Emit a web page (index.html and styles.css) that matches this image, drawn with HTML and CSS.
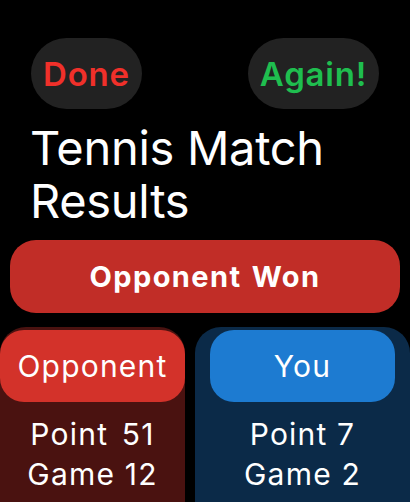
FILE: index.html
```html
<!DOCTYPE html>
<html>
<head>
<meta charset="utf-8">
<link rel="stylesheet" href="styles.css">
</head>
<body>
<div class="screen">
  <div class="topbar">
    <div class="pill done">Done</div>
    <div class="pill again">Again!</div>
  </div>
  <h1 class="title">Tennis Match<br>Results</h1>
  <div class="banner">Opponent Won</div>
  <div class="panels">
    <div class="panel panel-opp">
      <div class="player player-opp">Opponent</div>
      <div class="stats">
        <div class="wide">Point 51</div>
        <div>Game 12</div>
      </div>
    </div>
    <div class="panel panel-you">
      <div class="player player-you">You</div>
      <div class="stats">
        <div>Point 7</div>
        <div>Game 2</div>
      </div>
    </div>
  </div>
</div>
</body>
</html>
```
FILE: styles.css
```css
html, body {
  margin: 0;
  padding: 0;
  background: #000;
}
body {
  font-family: Inter, "Liberation Sans", sans-serif;
  color: #fff;
}
.screen {
  width: 410px;
  height: 502px;
  overflow: hidden;
  background: #000;
}
.topbar {
  display: flex;
  justify-content: space-between;
  padding: 38px 31px 0 31px;
}
.pill {
  height: 71px;
  border-radius: 36px;
  background: #222222;
  display: flex;
  align-items: center;
  justify-content: center;
  font-size: 33px;
  font-weight: 600;
  letter-spacing: 0.8px;
}
.done {
  width: 111px;
  color: #f0302a;
}
.again {
  width: 131px;
  color: #1fbe4f;
}
.title {
  margin: 12px 0 0 0;
  padding-left: 30px;
  font-size: 47px;
  font-weight: 400;
  line-height: 53px;
  letter-spacing: -0.3px;
}
.banner {
  margin: 13px 10px 0 10px;
  height: 73px;
  border-radius: 26px;
  background: #c12d27;
  display: flex;
  align-items: center;
  justify-content: center;
  font-size: 29px;
  font-weight: 700;
  letter-spacing: 1.4px;
  word-spacing: 2px;
}
.panels {
  display: flex;
  gap: 10px;
  margin-top: 14px;
  height: 200px;
}
.panel {
  border-radius: 26px 26px 0 0;
  padding-top: 3px;
}
.panel-opp {
  width: 185px;
  background: #4a1210;
}
.panel-you {
  flex: 1;
  background: #0b2a48;
  padding-left: 15px;
  padding-right: 15px;
}
.player {
  height: 72px;
  border-radius: 24px;
  display: flex;
  align-items: center;
  justify-content: center;
  font-size: 30px;
  font-weight: 400;
  letter-spacing: 1.2px;
}
.player-opp {
  background: #d3322a;
}
.player-you {
  background: #1d7bd1;
}
.stats {
  padding-top: 12px;
  text-align: center;
  font-size: 30px;
  line-height: 40px;
  letter-spacing: 1.2px;
}
.wide {
  word-spacing: 4px;
}
```
